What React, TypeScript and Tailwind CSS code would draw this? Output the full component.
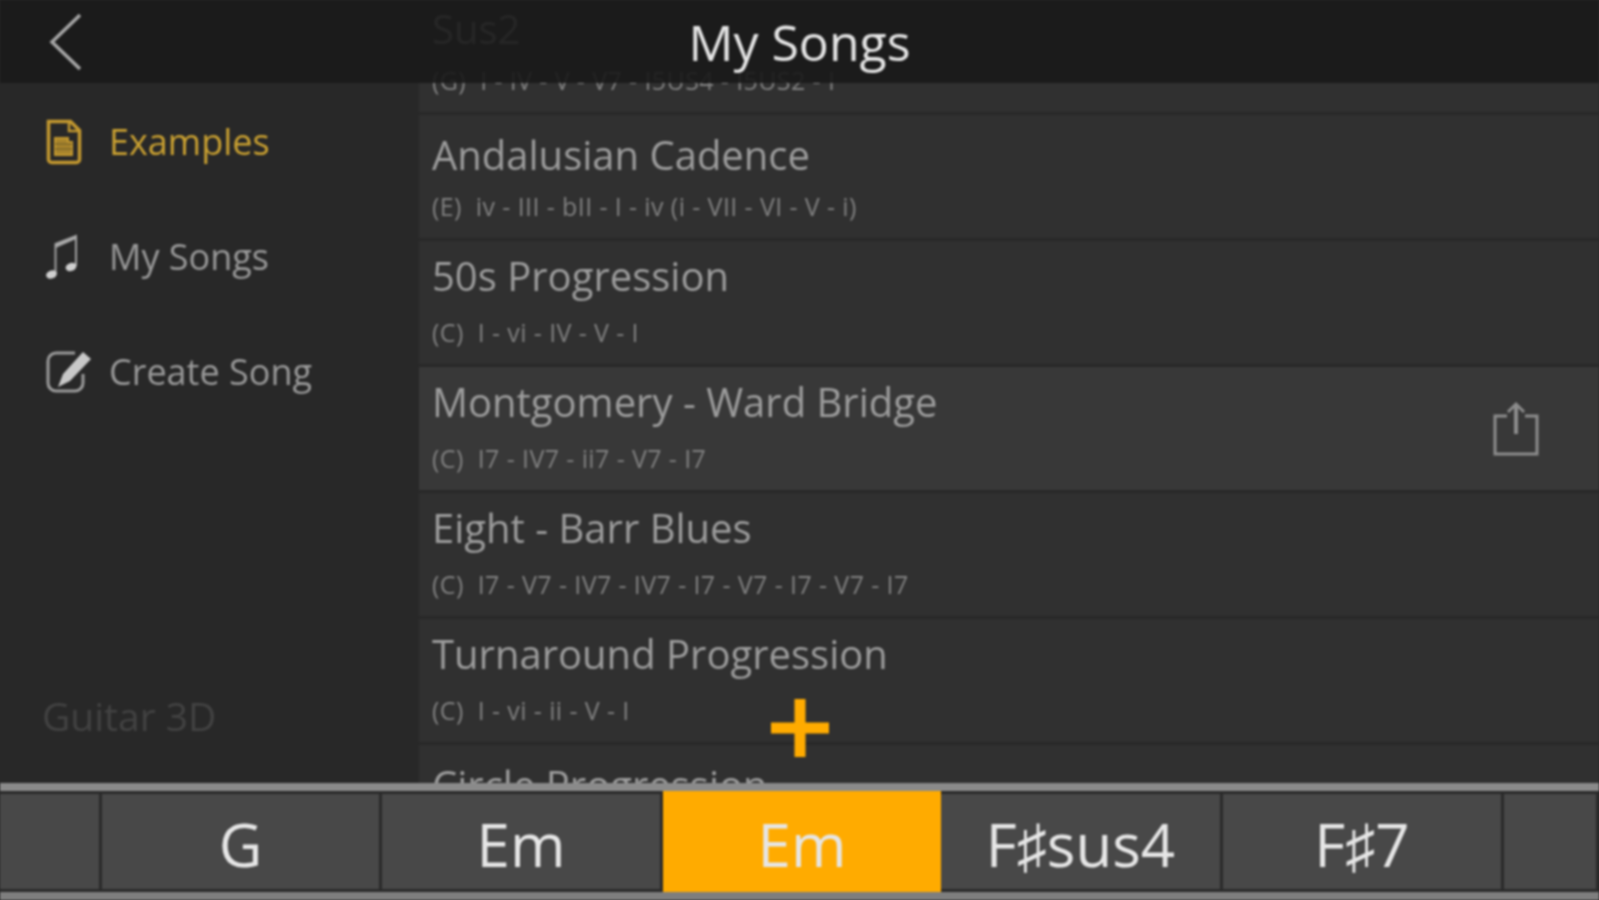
const rows: { title: string; keyName: string; sub: string; active?: boolean; shift: string }[] = [
  { title: "Sus2", keyName: "(G)", sub: "I - IV - V - V7 - I5US4 - I5US2 - I", shift: "mt-[-4px] mb-[5px]" },
  { title: "Andalusian Cadence", keyName: "(E)", sub: "iv - III - bII - I - iv (i - VII - VI - V - i)", shift: "mt-[-4px] mb-[5px]" },
  { title: "50s Progression", keyName: "(C)", sub: "I - vi - IV - V - I", shift: "mt-[-9px] mb-[10px]" },
  { title: "Montgomery - Ward Bridge", keyName: "(C)", sub: "I7 - IV7 - ii7 - V7 - I7", active: true, shift: "mt-[-9px] mb-[10px]" },
  { title: "Eight - Barr Blues", keyName: "(C)", sub: "I7 - V7 - IV7 - IV7 - I7 - V7 - I7 - V7 - I7", shift: "mt-[-9px] mb-[10px]" },
  { title: "Turnaround Progression", keyName: "(C)", sub: "I - vi - ii - V - I", shift: "mt-[-9px] mb-[10px]" },
  { title: "Circle Progression", keyName: "", sub: "", shift: "mt-[-4px] mb-[5px]" },
];

const chords: { label: string; active?: boolean; w: string }[] = [
  { label: "", w: "w-[102px]" },
  { label: "G", w: "w-[280px]" },
  { label: "Em", w: "w-[281px]" },
  { label: "Em", active: true, w: "w-[278px]" },
  { label: "F♯sus4", w: "w-[282px]" },
  { label: "F♯7", w: "w-[281px]" },
  { label: "", w: "flex-1" },
];

function DocIcon() {
  return (
    <svg width="38" height="46" viewBox="0 0 38 46" fill="none" stroke="#c3982f" strokeWidth="3.500">
      <path d="M3.500 2.500h22l9 9v29a3 3 0 0 1-3 3h-25a3 3 0 0 1-3-3z" />
      <path d="M24 3v9h9" strokeWidth="2.500" />
      <path d="M10 19h13v4h4v13H10z" fill="#a8842c" stroke="#c3982f" strokeWidth="2" />
      <path d="M10 25h17M10 30h17" stroke="#7d6528" strokeWidth="1.500" />
    </svg>
  );
}

function NoteIcon() {
  return (
    <svg width="36" height="48" viewBox="0 0 36 48" fill="none">
      <path d="M10.500 41V11L31 3v30" stroke="#a0a0a0" strokeWidth="2" />
      <path d="M10.500 11L31 3v3L10.500 15z" fill="#a8a8a8" />
      <ellipse cx="6.500" cy="41.500" rx="5.500" ry="4" fill="#d0d0d0" transform="rotate(-18 6.500 41.500)" />
      <ellipse cx="26" cy="34" rx="5.500" ry="4" fill="#d0d0d0" transform="rotate(-18 26 34)" />
    </svg>
  );
}

function EditIcon() {
  return (
    <svg width="48" height="44" viewBox="0 0 48 44" fill="none">
      <path d="M30 3H11a8 8 0 0 0-8 8v22a8 8 0 0 0 8 8h19a8 8 0 0 0 8-8V24" stroke="#9a9a9a" strokeWidth="3" />
      <path d="M38 2l8 7-21 22-12 6 5-13z" fill="#c8c8c8" />
    </svg>
  );
}

function ShareIcon() {
  return (
    <svg width="46" height="56" viewBox="0 0 46 56" fill="none" stroke="#8c8c8c" strokeWidth="3">
      <path d="M14 15H2v38h42V15H32" />
      <path d="M23 33V5" strokeWidth="4" />
      <path d="M15 11l8-8 8 8" />
    </svg>
  );
}

function NavItem({ icon, label, active }: { icon: React.ReactNode; label: string; active?: boolean }) {
  return (
    <div className={`flex h-[115px] items-center ${active ? "text-[#c9a031]" : "text-[#999999]"}`}>
      <div className="flex w-[64px] shrink-0 justify-start">{icon}</div>
      <span className="text-[36px] leading-none">{label}</span>
    </div>
  );
}

export default function App() {
  return (
    <div className="h-[900px] w-[1599px] overflow-hidden bg-[#282828]">
      <div className="flex h-[900px] w-[1599px] flex-col overflow-hidden bg-[#282828] font-['Open_Sans','Noto_Sans',sans-serif] blur-[1px]">
        <div className="relative flex min-h-0 flex-1 overflow-hidden">
          <aside className="flex w-[419px] shrink-0 flex-col pl-[45px] pt-[84px]">
            <NavItem icon={<DocIcon />} label="Examples" active />
            <NavItem icon={<NoteIcon />} label="My Songs" />
            <NavItem icon={<EditIcon />} label="Create Song" />
            <div className="ml-[-3px] mt-auto pb-[48px] text-[39px] leading-none text-[#424242]">Guitar 3D</div>
          </aside>

          <main className="mt-[-11px] flex min-w-0 flex-1 flex-col gap-[3px]">
            {rows.map((r) => (
              <div
                key={r.title}
                className={`flex h-[123px] shrink-0 items-center justify-between pl-[13px] pr-[60px] ${
                  r.active ? "bg-[#383838]" : "bg-[#303030]"
                }`}
              >
                <div className="flex flex-col">
                  <span className={`text-[40px] leading-[54px] text-[#9c9c9c] ${r.shift}`}>{r.title}</span>
                  <div className="mt-[3px] flex h-[32px] gap-[14px] text-[25px] leading-[32px] tracking-[0.4px] text-[#808080]">
                    {r.keyName && <span>{r.keyName}</span>}
                    {r.sub && <span>{r.sub}</span>}
                  </div>
                </div>
                {r.active && <ShareIcon />}
              </div>
            ))}
          </main>

          <header className="absolute inset-x-0 top-0 flex h-[83px] items-center justify-center bg-[#191919]/90">
            <svg className="absolute left-[48px] top-[12px]" width="36" height="60" viewBox="0 0 36 60" fill="none" stroke="#a6a6a6" strokeWidth="3.500">
              <path d="M32 3L4 30l28 27" />
            </svg>
            <span className="text-[50px] leading-none text-[#e4e4e4]">My Songs</span>
          </header>

          <svg className="absolute left-[771px] top-[699px]" width="58" height="58" viewBox="0 0 58 58" fill="#ffab00">
            <path d="M23.500 0h11v23.500H58v11H34.500V58h-11V34.500H0v-11h23.500z" />
          </svg>
        </div>

        <footer className="flex h-[117px] shrink-0 flex-col bg-[#7e7e7e]">
          <div className="h-[8px] shrink-0 bg-[#8a8a8a]" />
          <div className="flex h-[101px] shrink-0 bg-[#2a2a2a]">
            {chords.map((c, i) => (
              <div
                key={i}
                className={`flex h-full items-center justify-center pt-[4px] ${c.w} ${
                  c.active ? "bg-[#ffab00]" : "border-y-[3px] border-r-[3px] border-[#2a2a2a] bg-[#484848]"
                }`}
              >
                <span className="text-[60px] leading-none text-[#e6e6e6]">{c.label}</span>
              </div>
            ))}
          </div>
          <div className="min-h-0 flex-1 bg-[#7e7e7e]" />
        </footer>
      </div>
    </div>
  );
}
